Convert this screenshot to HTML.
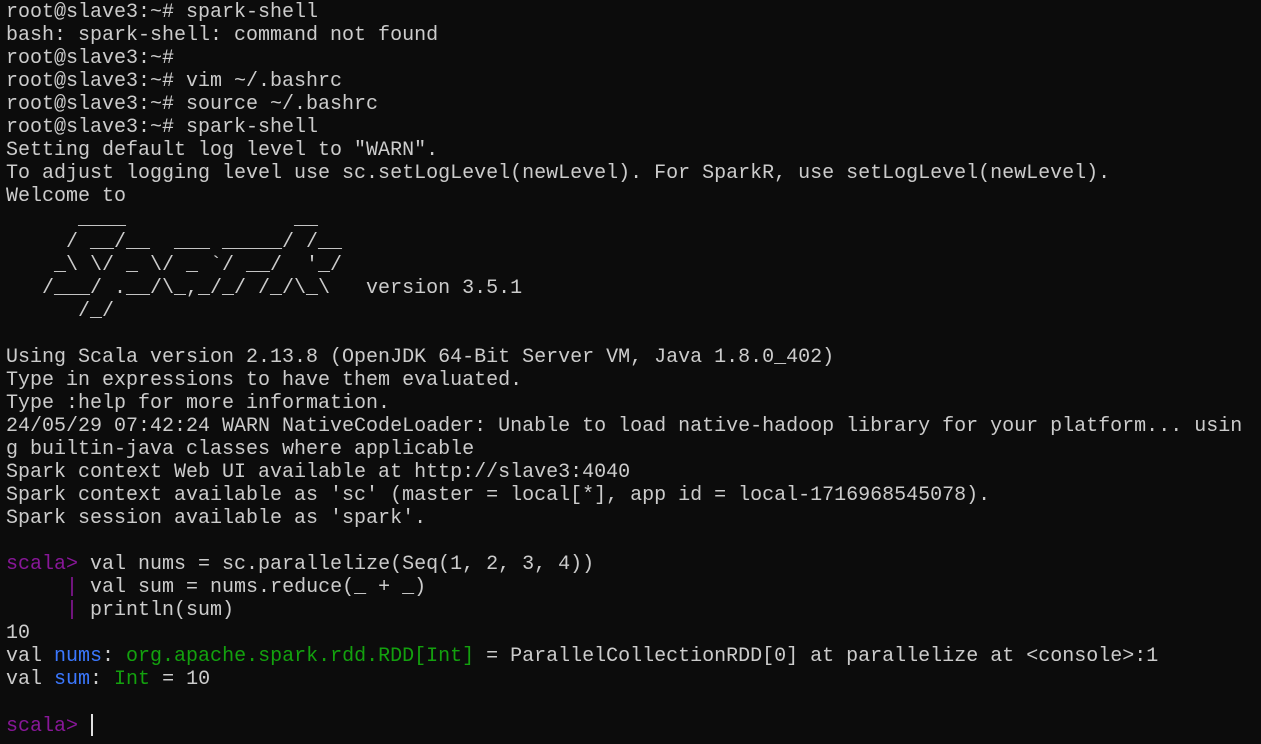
<!DOCTYPE html>
<html><head><meta charset="utf-8"><style>
html,body{margin:0;padding:0;background:#0c0c0c;width:1261px;height:744px;overflow:hidden}
pre{margin:0;padding:0 0 0 6px;font-family:"Liberation Mono",monospace;font-size:20px;line-height:23px;color:#cccccc;white-space:pre;position:relative;top:1px}
.p{color:#881798}.b{color:#3b78ff}.g{color:#13a10e}
.cur{display:inline-block;width:2px;height:22px;background:#e0e0e0;vertical-align:-5px;margin-left:1px}
</style></head><body><pre>root@slave3:~# spark-shell
bash: spark-shell: command not found
root@slave3:~#
root@slave3:~# vim ~/.bashrc
root@slave3:~# source ~/.bashrc
root@slave3:~# spark-shell
Setting default log level to "WARN".
To adjust logging level use sc.setLogLevel(newLevel). For SparkR, use setLogLevel(newLevel).
Welcome to
      ____              __
     / __/__  ___ _____/ /__
    _\ \/ _ \/ _ `/ __/  '_/
   /___/ .__/\_,_/_/ /_/\_\   version 3.5.1
      /_/

Using Scala version 2.13.8 (OpenJDK 64-Bit Server VM, Java 1.8.0_402)
Type in expressions to have them evaluated.
Type :help for more information.
24/05/29 07:42:24 WARN NativeCodeLoader: Unable to load native-hadoop library for your platform... usin
g builtin-java classes where applicable
Spark context Web UI available at http://slave3:4040
Spark context available as 'sc' (master = local[*], app id = local-1716968545078).
Spark session available as 'spark'.

<span class="p">scala&gt;</span> val nums = sc.parallelize(Seq(1, 2, 3, 4))
     <span class="p">|</span> val sum = nums.reduce(_ + _)
     <span class="p">|</span> println(sum)
10
val <span class="b">nums</span>: <span class="g">org.apache.spark.rdd.RDD[Int]</span> = ParallelCollectionRDD[0] at parallelize at &lt;console&gt;:1
val <span class="b">sum</span>: <span class="g">Int</span> = 10

<span class="p">scala&gt;</span> <span class="cur"></span></pre></body></html>
